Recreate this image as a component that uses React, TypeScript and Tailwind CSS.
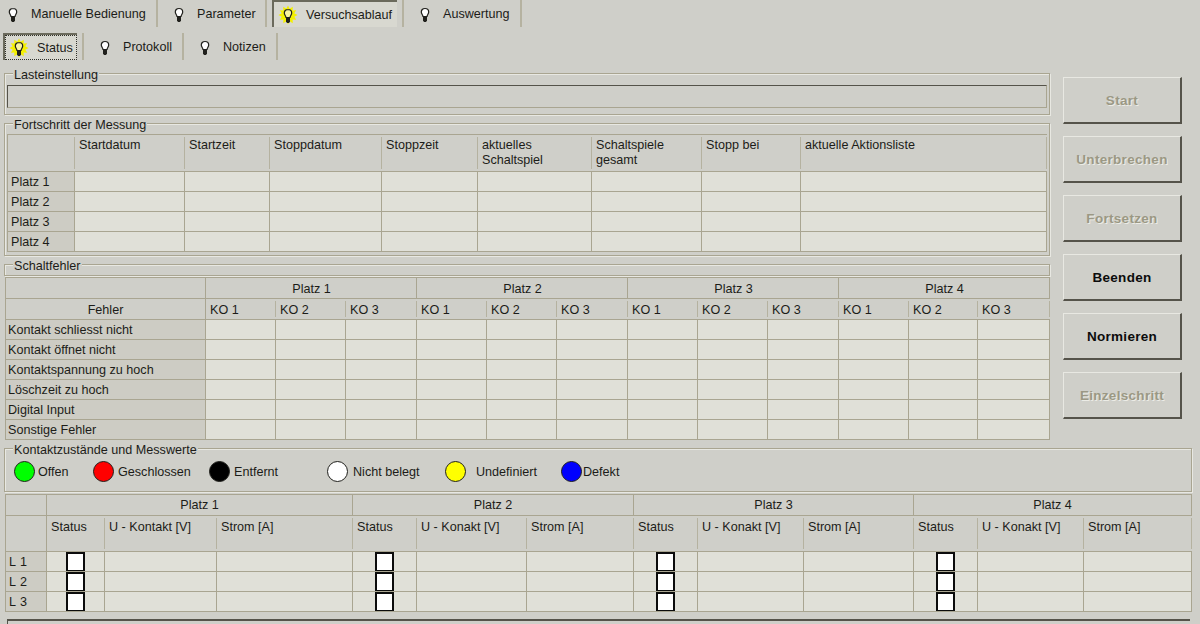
const face = "font-['Liberation_Sans',Arial,sans-serif] text-[12.6px] text-[#1c1c18]";

// spiky glow around a lit bulb
const halo = Array.from({ length: 24 }, (_, i) => {
  const r = i % 2 === 0 ? 9.5 : 6.5;
  const a = (i * Math.PI) / 12;
  return `${(11 + r * Math.sin(a)).toFixed(1)},${(11 - r * Math.cos(a)).toFixed(1)}`;
}).join(' ');

function Bulb({ lit = false }: { lit?: boolean }) {
  return (
    <svg width="22" height="22" viewBox="0 0 22 22" className="shrink-0">
      {lit && <polygon points={halo} fill="#f4f000" />}
      <path
        d="M11 5.500c-2.200 0-3.700 1.600-3.700 3.600 0 1.600 1.200 2.400 1.700 4.400h4c.5-2 1.700-2.800 1.700-4.400 0-2-1.500-3.600-3.700-3.600z"
        fill={lit ? '#f8f4a0' : '#ffffff'}
        stroke="#20201c"
        strokeWidth="1.200"
      />
      <path d="M9 14h4v3.500l-1 1.500h-2l-1-1.500z" fill="#20201c" />
    </svg>
  );
}

function Tab({ label, lit = false, focus = false, className }: { label: string; lit?: boolean; focus?: boolean; className: string }) {
  return (
    <div className={`flex h-full shrink-0 items-center ${className}`}>
      <div className={`flex h-full w-full items-center gap-[7px] ${focus ? 'border border-dotted border-[#30302a] pl-[2px]' : ''}`}>
        <Bulb lit={lit} />
        <span className="whitespace-nowrap pt-[1px]">{label}</span>
      </div>
    </div>
  );
}

function Group({ title, className, children }: { title: string; className: string; children?: React.ReactNode }) {
  return (
    <div className={`border border-[#a9a591] shadow-[inset_1px_1px_0_#e8e8e2,1px_1px_0_#e8e8e2] ${className}`}>
      <div className="-mt-[6px] ml-[8px] h-[14px] w-fit bg-[#cfcfc9] px-[1px] leading-[14px]">{title}</div>
      {children}
    </div>
  );
}

function Cell({ className = '', children }: { className?: string; children?: React.ReactNode }) {
  return <div className={`overflow-hidden border-r border-b border-[#a9a591] ${className}`}>{children}</div>;
}

// header cells: the divider stops short of the row lines
function HeadCell({ className = '', children }: { className?: string; children?: React.ReactNode }) {
  return (
    <div className="overflow-hidden border-b border-[#a9a591] bg-[#cfcfc9] py-[2px]">
      <div className={`h-full border-r border-[#b5b2a0] pl-[4px] ${className}`}>{children}</div>
    </div>
  );
}

const progressCols = ['Startdatum', 'Startzeit', 'Stoppdatum', 'Stoppzeit', 'aktuelles Schaltspiel', 'Schaltspiele gesamt', 'Stopp bei', 'aktuelle Aktionsliste'];
const platz = ['Platz 1', 'Platz 2', 'Platz 3', 'Platz 4'];

function ProgressTable() {
  return (
    <div className="mx-[2px] mt-[2px] grid grid-cols-[67px_110px_85px_112px_96px_114px_110px_99px_246px] grid-rows-[37px_20px_20px_20px_20px] border-t border-l border-[#a9a591]">
      <HeadCell />
      {progressCols.map((c) => (
        <HeadCell key={c} className="pt-[1px] leading-[15px]">
          <span className={c.length > 15 && c !== 'aktuelle Aktionsliste' ? 'block w-[80px]' : ''}>{c}</span>
        </HeadCell>
      ))}
      {platz.map((p) => (
        <>
          <Cell key={p} className="bg-[#cdccc4] pl-[3px] pt-[1px] leading-[19px]">{p}</Cell>
          {progressCols.map((c) => <Cell key={p + c} className="bg-[#e0e0d8]" />)}
        </>
      ))}
    </div>
  );
}

const fehler = ['Kontakt schliesst nicht', 'Kontakt öffnet nicht', 'Kontaktspannung zu hoch', 'Löschzeit zu hoch', 'Digital Input', 'Sonstige Fehler'];
const koCols = Array.from({ length: 12 }, (_, i) => `KO ${(i % 3) + 1}`);

function FaultTable() {
  return (
    <div className="ml-[1px] grid w-[1045px] grid-cols-[200px_70px_70px_71px_70px_70px_71px_70px_70px_71px_70px_69px_72px] grid-rows-[21px_21px_20px_20px_20px_20px_20px_20px] border-t border-l border-[#a9a591]">
      <Cell className="bg-[#cfcfc9]" />
      {platz.map((p) => (
        <Cell key={p} className="col-span-3 bg-[#cfcfc9] pl-[1px] pt-[2px] text-center leading-[18px]">{p}</Cell>
      ))}
      <Cell className="bg-[#cfcfc9] pt-[1px] text-center leading-[20px]">Fehler</Cell>
      {koCols.map((k, i) => (
        <HeadCell key={i} className="pt-[1px] leading-[16px]">{k}</HeadCell>
      ))}
      {fehler.map((f) => (
        <>
          <Cell key={f} className="bg-[#cdccc4] pl-[2px] pt-[1px] leading-[18px]">{f}</Cell>
          {koCols.map((k, i) => <Cell key={f + i} className="bg-[#e0e0d8]" />)}
        </>
      ))}
    </div>
  );
}

const legend = [
  { label: 'Offen', fill: 'bg-[#00ff00]', w: 'w-[79px] gap-[3px]' },
  { label: 'Geschlossen', fill: 'bg-[#ff0000]', w: 'w-[116px] gap-[4px]' },
  { label: 'Entfernt', fill: 'bg-[#000000]', w: 'w-[118px] gap-[4px]' },
  { label: 'Nicht belegt', fill: 'bg-[#ffffff]', w: 'w-[118px] gap-[5px]' },
  { label: 'Undefiniert', fill: 'bg-[#ffff00]', w: 'w-[116px] gap-[10px]' },
  { label: 'Defekt', fill: 'bg-[#0000ff]', w: 'w-[80px] gap-[1px]' },
];

const measure = [
  { name: 'Platz 1', volt: 'U - Kontakt [V]' },
  { name: 'Platz 2', volt: 'U - Konakt [V]' },
  { name: 'Platz 3', volt: 'U - Konakt [V]' },
  { name: 'Platz 4', volt: 'U - Konakt [V]' },
];

function MeasureTable() {
  return (
    <div className="ml-[1px] mt-[2px] grid w-[1187px] grid-cols-[41px_58px_112px_136px_64px_110px_107px_64px_106px_110px_64px_106px_108px] grid-rows-[21px_36px_20px_20px_20px] border-t border-l border-[#a9a591]">
      <Cell className="bg-[#cfcfc9]" />
      {measure.map((m) => (
        <Cell key={m.name} className="col-span-3 bg-[#cfcfc9] pt-[1px] text-center leading-[19px]">{m.name}</Cell>
      ))}
      <Cell className="bg-[#cfcfc9]" />
      {measure.map((m) => (
        <>
          <HeadCell key={m.name + 's'} className="pt-[2px] leading-[15px]">Status</HeadCell>
          <HeadCell key={m.name + 'v'} className="pt-[2px] leading-[15px]">{m.volt}</HeadCell>
          <HeadCell key={m.name + 'a'} className="pt-[2px] leading-[15px]">Strom [A]</HeadCell>
        </>
      ))}
      {['L 1', 'L 2', 'L 3'].map((l) => (
        <>
          <Cell key={l} className="bg-[#cdccc4] pl-[3px] pt-[1px] leading-[18px] tracking-[0.5px]">{l}</Cell>
          {measure.map((m) => (
            <>
              <Cell key={l + m.name} className="flex justify-center bg-[#e0e0d8]">
                <div className="h-[20px] w-[19px] shrink-0 border-2 border-[#0c0c0c] bg-white" />
              </Cell>
              <Cell key={l + m.name + 'v'} className="bg-[#e0e0d8]" />
              <Cell key={l + m.name + 'a'} className="bg-[#e0e0d8]" />
            </>
          ))}
        </>
      ))}
    </div>
  );
}

function SideButton({ label, active = false }: { label: string; active?: boolean }) {
  return (
    <div
      className={`flex h-[47px] w-[119px] items-center justify-center border-t border-l border-[#e8e8e2] border-r-2 border-b-2 border-r-[#55534a] border-b-[#55534a] pt-[2px] text-[13.5px] font-bold tracking-[0.3px] ${
        active ? 'text-[#0c0c0c]' : 'text-[#9b9884] [text-shadow:1px_1px_0_#ecece6]'
      }`}
    >
      {label}
    </div>
  );
}

export default function App() {
  const sep = 'border-r-2 border-[#b5b2a0]';
  const on = 'border-t-2 border-l-2 border-[#6b6a5c] bg-[#d8d8d0]';
  return (
    <div className={`h-[624px] w-[1200px] overflow-hidden bg-[#cfcfc9] ${face}`}>
      <div className="flex h-[27px]">
        <Tab label="Manuelle Bedienung" className={`w-[158px] pl-[2px] ${sep}`} />
        <Tab label="Parameter" className={`w-[109px] pl-[10px] ${sep}`} />
        <Tab label="Versuchsablauf" lit className={`ml-[5px] w-[125px] pl-[3px] ${on}`} />
        <div className={`w-[7px] ${sep}`} />
        <Tab label="Auswertung" className={`w-[118px] pl-[10px] ${sep}`} />
      </div>
      <div className="mt-[6px] flex h-[27px]">
        <Tab label="Status" lit focus className={`ml-[3px] w-[74px] ${on}`} />
        <div className={`w-[7px] ${sep}`} />
        <Tab label="Protokoll" className={`w-[100px] pl-[10px] ${sep}`} />
        <Tab label="Notizen" className={`w-[94px] pl-[10px] ${sep}`} />
      </div>
      <div className="mt-[13px] flex">
        <div className="ml-[4px] w-[1046px]">
          <Group title="Lasteinstellung" className="h-[42px]">
            <div className="mx-[2px] mt-[3px] h-[23px] border border-[#a9a591] border-t-[#55534a] border-l-[#55534a]" />
          </Group>
          <Group title="Fortschritt der Messung" className="mt-[8px] h-[133px]">
            <ProgressTable />
          </Group>
          <Group title="Schaltfehler" className="mt-[8px] h-[12px]" />
          <div className="mt-[1px]"><FaultTable /></div>
        </div>
        <div className="ml-[13px] mt-[4px] flex flex-col gap-[12px]">
          <SideButton label="Start" />
          <SideButton label="Unterbrechen" />
          <SideButton label="Fortsetzen" />
          <SideButton label="Beenden" active />
          <SideButton label="Normieren" active />
          <SideButton label="Einzelschritt" />
        </div>
      </div>
      <div className="ml-[4px] mt-[8px] w-[1188px]">
        <Group title="Kontaktzustände und Messwerte" className="h-[44px]">
          <div className="ml-[9px] mt-[4px] flex items-center">
            {legend.map((l) => (
              <div key={l.label} className={`flex items-center ${l.w}`}>
                <div className={`h-[21px] w-[21px] shrink-0 rounded-full border border-[#20201c] ${l.fill}`} />
                <span className="pt-[2px]">{l.label}</span>
              </div>
            ))}
          </div>
        </Group>
        <MeasureTable />
        <div className="ml-[3px] mr-[2px] mt-[7px] h-[20px] border-t-2 border-l border-[#55534a]" />
      </div>
    </div>
  );
}
